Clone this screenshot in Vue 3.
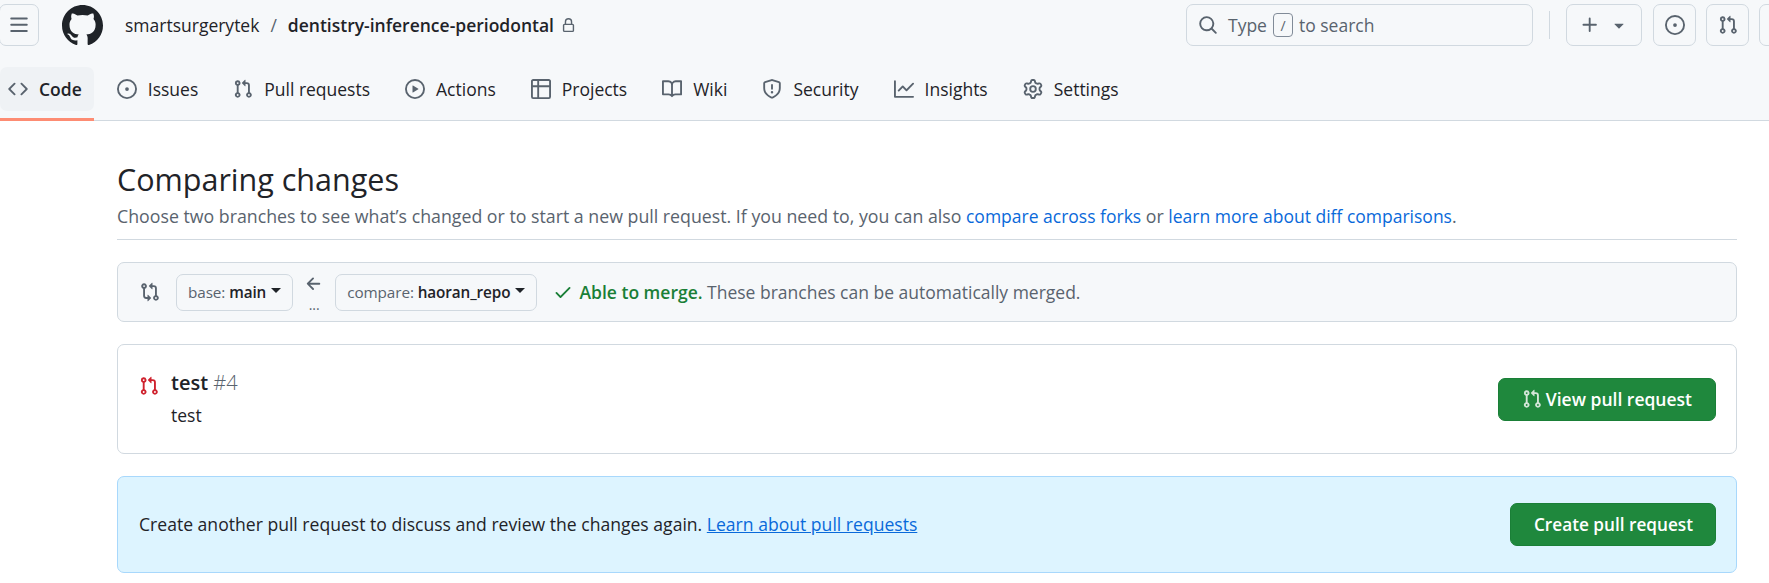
<script setup>
const icons = {
  bars: 'M1 2.75A.75.75 0 0 1 1.75 2h12.5a.75.75 0 0 1 0 1.5H1.75A.75.75 0 0 1 1 2.75Zm0 5A.75.75 0 0 1 1.75 7h12.5a.75.75 0 0 1 0 1.5H1.75A.75.75 0 0 1 1 7.75ZM1.75 12h12.5a.75.75 0 0 1 0 1.5H1.75a.75.75 0 0 1 0-1.5Z',
  github: 'M8 0c4.42 0 8 3.58 8 8a8.013 8.013 0 0 1-5.45 7.59c-.4.08-.55-.17-.55-.38 0-.27.01-1.13.01-2.2 0-.75-.25-1.23-.54-1.48 1.78-.2 3.65-.88 3.65-3.95 0-.88-.31-1.59-.82-2.15.08-.2.36-1.02-.08-2.12 0 0-.67-.22-2.2.82-.64-.18-1.32-.27-2-.27-.68 0-1.36.09-2 .27-1.53-1.03-2.2-.82-2.2-.82-.44 1.1-.16 1.92-.08 2.12-.51.56-.82 1.28-.82 2.15 0 3.06 1.86 3.75 3.64 3.95-.23.2-.44.55-.51 1.07-.46.21-1.61.55-2.33-.66-.15-.24-.6-.83-1.23-.82-.67.01-.27.38.01.53.34.19.73.9.82 1.13.16.45.68 1.31 2.69.94 0 .67.01 1.3.01 1.49 0 .21-.15.45-.55.38A7.995 7.995 0 0 1 0 8c0-4.42 3.58-8 8-8Z',
  lock: 'M4 4a4 4 0 0 1 8 0v2h.25c.966 0 1.75.784 1.75 1.75v5.5A1.75 1.75 0 0 1 12.25 15h-8.5A1.75 1.75 0 0 1 2 13.25v-5.5C2 6.784 2.784 6 3.75 6H4Zm8.25 3.5h-8.5a.25.25 0 0 0-.25.25v5.5c0 .138.112.25.25.25h8.5a.25.25 0 0 0 .25-.25v-5.5a.25.25 0 0 0-.25-.25ZM10.5 6V4a2.5 2.5 0 1 0-5 0v2Z',
  code: 'm11.28 3.22 4.25 4.25a.75.75 0 0 1 0 1.06l-4.25 4.25a.749.749 0 0 1-1.275-.326.749.749 0 0 1 .215-.734L13.94 8l-3.72-3.72a.749.749 0 0 1 .326-1.275.749.749 0 0 1 .734.215Zm-6.56 0a.751.751 0 0 1 1.042.018.751.751 0 0 1 .018 1.042L2.06 8l3.72 3.72a.749.749 0 0 1-.326 1.275.749.749 0 0 1-.734-.215L.47 8.53a.75.75 0 0 1 0-1.06Z',
  issue: 'M8 9.5a1.5 1.5 0 1 0 0-3 1.5 1.5 0 0 0 0 3ZM8 0a8 8 0 1 1 0 16A8 8 0 0 1 8 0ZM1.5 8a6.5 6.5 0 1 0 13 0 6.5 6.5 0 0 0-13 0Z',
  pr: 'M1.5 3.25a2.25 2.25 0 1 1 3 2.122v5.256a2.251 2.251 0 1 1-1.5 0V5.372A2.25 2.25 0 0 1 1.5 3.25Zm5.677-.177L9.573.677A.25.25 0 0 1 10 .854V2.5h1A2.5 2.5 0 0 1 13.5 5v5.628a2.251 2.251 0 1 1-1.5 0V5a1 1 0 0 0-1-1h-1v1.646a.25.25 0 0 1-.427.177L7.177 3.427a.25.25 0 0 1 0-.354ZM3.75 2.5a.75.75 0 1 0 0 1.5.75.75 0 0 0 0-1.5Zm0 9.5a.75.75 0 1 0 0 1.5.75.75 0 0 0 0-1.5Zm8.25.75a.75.75 0 1 0 1.5 0 .75.75 0 0 0-1.5 0Z',
  play: 'M8 0a8 8 0 1 1 0 16A8 8 0 0 1 8 0ZM1.5 8a6.5 6.5 0 1 0 13 0 6.5 6.5 0 0 0-13 0Zm4.879-2.773 4.264 2.559a.25.25 0 0 1 0 .428l-4.264 2.559A.25.25 0 0 1 6 10.559V5.442a.25.25 0 0 1 .379-.215Z',
  table: 'M0 1.75C0 .784.784 0 1.75 0h12.5C15.216 0 16 .784 16 1.75v12.5A1.75 1.75 0 0 1 14.25 16H1.75A1.75 1.75 0 0 1 0 14.25ZM6.5 6.5v8h7.75a.25.25 0 0 0 .25-.25V6.5Zm8-1.5V1.75a.25.25 0 0 0-.25-.25H6.5V5Zm-13 1.5v7.75c0 .138.112.25.25.25H5v-8ZM5 5V1.5H1.75a.25.25 0 0 0-.25.25V5Z',
  book: 'M0 1.75A.75.75 0 0 1 .75 1h4.253c1.227 0 2.317.59 3 1.501A3.743 3.743 0 0 1 11.006 1h4.245a.75.75 0 0 1 .75.75v10.5a.75.75 0 0 1-.75.75h-4.507a2.25 2.25 0 0 0-1.591.659l-.622.621a.75.75 0 0 1-1.06 0l-.622-.621A2.25 2.25 0 0 0 5.258 13H.75a.75.75 0 0 1-.75-.75Zm7.251 10.324.004-5.073-.002-2.253A2.25 2.25 0 0 0 5.003 2.5H1.5v9h3.757a3.75 3.75 0 0 1 1.994.574ZM8.755 4.75l-.004 7.322a3.752 3.752 0 0 1 1.992-.572H14.5v-9h-3.495a2.25 2.25 0 0 0-2.25 2.25Z',
  shield: 'M7.467.133a1.748 1.748 0 0 1 1.066 0l5.25 1.68A1.75 1.75 0 0 1 15 3.48V7c0 1.566-.32 3.182-1.303 4.682-.983 1.498-2.585 2.813-5.032 3.855a1.697 1.697 0 0 1-1.33 0c-2.447-1.042-4.049-2.357-5.032-3.855C1.32 10.182 1 8.566 1 7V3.48a1.75 1.75 0 0 1 1.217-1.667Zm.61 1.429a.25.25 0 0 0-.153 0l-5.25 1.68a.25.25 0 0 0-.174.238V7c0 1.358.275 2.666 1.057 3.86.784 1.194 2.121 2.34 4.366 3.297a.196.196 0 0 0 .154 0c2.245-.956 3.582-2.104 4.366-3.298C13.225 9.666 13.5 8.36 13.5 7V3.48a.251.251 0 0 0-.174-.237l-5.25-1.68ZM8.75 4.75v3a.75.75 0 0 1-1.5 0v-3a.75.75 0 0 1 1.5 0ZM9 10.5a1 1 0 1 1-2 0 1 1 0 0 1 2 0Z',
  graph: 'M1.5 1.75V13.5h13.75a.75.75 0 0 1 0 1.5H.75a.75.75 0 0 1-.75-.75V1.75a.75.75 0 0 1 1.5 0Zm14.28 2.53-5.25 5.25a.75.75 0 0 1-1.06 0L7 7.06 4.28 9.78a.751.751 0 0 1-1.042-.018.751.751 0 0 1-.018-1.042l3.25-3.25a.75.75 0 0 1 1.06 0L10 7.94l4.72-4.72a.751.751 0 0 1 1.042.018.751.751 0 0 1 .018 1.042Z',
  gear: 'M8 0a8.2 8.2 0 0 1 .701.031C9.444.095 9.99.645 10.16 1.29l.288 1.107c.018.066.079.158.212.224.231.114.454.243.668.386.123.082.233.09.299.071l1.103-.303c.644-.176 1.392.021 1.82.63.27.385.506.792.704 1.218.315.675.111 1.422-.364 1.891l-.814.806c-.049.048-.098.147-.088.294.016.257.016.515 0 .772-.01.147.038.246.088.294l.814.806c.475.469.679 1.216.364 1.891a7.977 7.977 0 0 1-.704 1.217c-.428.61-1.176.807-1.82.63l-1.102-.302c-.067-.019-.177-.011-.3.071a5.909 5.909 0 0 1-.668.386c-.133.066-.194.158-.211.224l-.29 1.106c-.168.646-.715 1.196-1.458 1.26a8.006 8.006 0 0 1-1.402 0c-.743-.064-1.289-.614-1.458-1.26l-.289-1.106c-.018-.066-.079-.158-.212-.224a5.738 5.738 0 0 1-.668-.386c-.123-.082-.233-.09-.299-.071l-1.103.303c-.644.176-1.392-.021-1.82-.63a8.12 8.12 0 0 1-.704-1.218c-.315-.675-.111-1.422.363-1.891l.815-.806c.05-.048.098-.147.088-.294a6.214 6.214 0 0 1 0-.772c.01-.147-.038-.246-.088-.294l-.815-.806C.635 6.045.431 5.298.746 4.623a7.92 7.92 0 0 1 .704-1.217c.428-.61 1.176-.807 1.82-.63l1.102.302c.067.019.177.011.3-.071.214-.143.437-.272.668-.386.133-.066.194-.158.211-.224l.29-1.106C6.009.645 6.556.095 7.299.03 7.53.01 7.764 0 8 0Zm-.571 1.525c-.036.003-.108.036-.137.146l-.289 1.105c-.147.561-.549.967-.998 1.189-.173.086-.34.183-.5.29-.417.278-.97.423-1.529.27l-1.103-.303c-.109-.03-.175.016-.195.045-.22.312-.412.644-.573.99-.014.031-.021.11.059.19l.815.806c.411.406.562.957.53 1.456a4.709 4.709 0 0 0 0 .582c.032.499-.119 1.05-.53 1.456l-.815.806c-.081.08-.073.159-.059.19.162.346.353.677.573.989.02.03.085.076.195.046l1.102-.303c.56-.153 1.113-.008 1.53.27.161.107.328.204.501.29.447.222.85.629.997 1.189l.289 1.105c.029.109.101.143.137.146a6.6 6.6 0 0 0 1.142 0c.036-.003.108-.036.137-.146l.289-1.105c.147-.561.549-.967.998-1.189.173-.086.34-.183.5-.29.417-.278.97-.423 1.529-.27l1.103.303c.109.029.175-.016.195-.045.22-.313.411-.644.573-.99.014-.031.021-.11-.059-.19l-.815-.806c-.411-.406-.562-.957-.53-1.456a4.709 4.709 0 0 0 0-.582c-.032-.499.119-1.05.53-1.456l.815-.806c.081-.08.073-.159.059-.19a6.464 6.464 0 0 0-.573-.989c-.02-.03-.085-.076-.195-.046l-1.102.303c-.56.153-1.113.008-1.53-.27a4.44 4.44 0 0 0-.501-.29c-.447-.222-.85-.629-.997-1.189l-.289-1.105c-.029-.11-.101-.143-.137-.146a6.6 6.6 0 0 0-1.142 0ZM11 8a3 3 0 1 1-6 0 3 3 0 0 1 6 0ZM9.5 8a1.5 1.5 0 1 0-3.001.001A1.5 1.5 0 0 0 9.5 8Z',
  search: 'M10.68 11.74a6 6 0 0 1-7.922-8.982 6 6 0 0 1 8.982 7.922l3.04 3.04a.749.749 0 0 1-.326 1.275.749.749 0 0 1-.734-.215ZM11.5 7a4.499 4.499 0 1 0-8.997 0A4.499 4.499 0 0 0 11.5 7Z',
  plus: 'M7.75 2a.75.75 0 0 1 .75.75V7h4.25a.75.75 0 0 1 0 1.5H8.5v4.25a.75.75 0 0 1-1.5 0V8.5H2.75a.75.75 0 0 1 0-1.5H7V2.75A.75.75 0 0 1 7.75 2Z',
  caret: 'm4.427 7.427 3.396 3.396a.25.25 0 0 0 .354 0l3.396-3.396A.25.25 0 0 0 11.396 7H4.604a.25.25 0 0 0-.177.427Z',
  arrow: 'M7.78 12.53a.75.75 0 0 1-1.06 0L2.47 8.28a.75.75 0 0 1 0-1.06l4.25-4.25a.751.751 0 0 1 1.042.018.751.751 0 0 1 .018 1.042L4.81 7h7.44a.75.75 0 0 1 0 1.5H4.81l2.97 2.97a.75.75 0 0 1 0 1.06Z',
  check: 'M13.78 4.22a.75.75 0 0 1 0 1.06l-7.25 7.25a.75.75 0 0 1-1.06 0L2.22 9.28a.751.751 0 0 1 .018-1.042.751.751 0 0 1 1.042-.018L6 10.94l6.72-6.72a.75.75 0 0 1 1.06 0Z',
  compare: 'M9.573.677A.25.25 0 0 1 10 .854V2.5h1A2.5 2.5 0 0 1 13.5 5v5.628a2.251 2.251 0 1 1-1.5 0V5a1 1 0 0 0-1-1h-1v1.646a.25.25 0 0 1-.427.177L7.177 3.427a.25.25 0 0 1 0-.354ZM6 12v-1.646a.25.25 0 0 1 .427-.177l2.396 2.396a.25.25 0 0 1 0 .354l-2.396 2.396A.25.25 0 0 1 6 15.146V13.5H5A2.5 2.5 0 0 1 2.5 11V5.372a2.25 2.25 0 1 1 1.5 0V11a1 1 0 0 0 1 1ZM4 3.25a.75.75 0 1 0-1.5 0 .75.75 0 0 0 1.5 0ZM12.75 12a.75.75 0 1 0 0 1.5.75.75 0 0 0 0-1.5Z'
}

const tabs = [
  { label: 'Code', icon: 'code', active: true },
  { label: 'Issues', icon: 'issue' },
  { label: 'Pull requests', icon: 'pr' },
  { label: 'Actions', icon: 'play' },
  { label: 'Projects', icon: 'table' },
  { label: 'Wiki', icon: 'book' },
  { label: 'Security', icon: 'shield' },
  { label: 'Insights', icon: 'graph' },
  { label: 'Settings', icon: 'gear' }
]
</script>

<template>
  <div class="page">
    <header class="header">
      <div class="top">
        <button class="btn-icon menu">
          <svg class="ic" viewBox="0 0 16 16"><path :d="icons.bars" /></svg>
        </button>
        <svg class="logo" viewBox="0 0 16 16"><path :d="icons.github" /></svg>
        <a class="owner">smartsurgerytek</a>
        <span class="slash">/</span>
        <a class="repo">dentistry-inference-periodontal</a>
        <svg class="lock" viewBox="0 0 16 16"><path :d="icons.lock" /></svg>
        <div class="spacer"></div>
        <div class="search">
          <svg class="ic" viewBox="0 0 16 16"><path :d="icons.search" /></svg>
          <span>Type</span>
          <kbd>/</kbd>
          <span>to search</span>
        </div>
        <span class="divider"></span>
        <button class="btn-icon plus">
          <svg class="ic" viewBox="0 0 16 16"><path :d="icons.plus" /></svg>
          <svg class="ic" viewBox="0 0 16 16"><path :d="icons.caret" /></svg>
        </button>
        <button class="btn-icon square">
          <svg class="ic" viewBox="0 0 16 16"><path :d="icons.issue" /></svg>
        </button>
        <button class="btn-icon square">
          <svg class="ic" viewBox="0 0 16 16"><path :d="icons.pr" /></svg>
        </button>
        <button class="btn-icon square"></button>
      </div>
      <nav class="tabs">
        <a v-for="t in tabs" :key="t.label" class="tab" :class="{ active: t.active }">
          <span class="tab-inner">
            <svg class="ic" viewBox="0 0 16 16"><path :d="icons[t.icon]" /></svg>
            {{ t.label }}
          </span>
        </a>
      </nav>
    </header>

    <main class="main">
      <h1>Comparing changes</h1>
      <p class="sub">
        Choose two branches to see what’s changed or to start a new pull request. If you need to, you can also
        <a>compare across forks</a> or <a>learn more about diff comparisons</a>.
      </p>

      <div class="range">
        <svg class="ic compare" viewBox="0 0 16 16"><path :d="icons.compare" /></svg>
        <button class="select">base: <b>main</b><i class="caret"></i></button>
        <div class="arrow">
          <svg class="ic" viewBox="0 0 16 16"><path :d="icons.arrow" /></svg>
          <span>...</span>
        </div>
        <button class="select">compare: <b>haoran_repo</b><i class="caret"></i></button>
        <svg class="ic check" viewBox="0 0 16 16"><path :d="icons.check" /></svg>
        <span class="merge"><b>Able to merge.</b> These branches can be automatically merged.</span>
      </div>

      <div class="card">
        <svg class="ic closed" viewBox="0 0 16 16"><path :d="icons.pr" /></svg>
        <div class="pr-text">
          <div class="pr-title"><b>test</b> <span>#4</span></div>
          <div class="pr-body">test</div>
        </div>
        <button class="green view">
          <svg class="ic" viewBox="0 0 16 16"><path :d="icons.pr" /></svg>
          View pull request
        </button>
      </div>

      <div class="notice">
        <span class="notice-text">Create another pull request to discuss and review the changes again. <a>Learn about pull requests</a></span>
        <button class="green create">Create pull request</button>
      </div>
    </main>
  </div>
</template>

<style scoped>
.page {
  font-family: "Open Sans", "Noto Sans", sans-serif;
  font-size: 17.5px;
  color: #1f2328;
  height: 583px;
  overflow: hidden;
  background: #fff;
}
.ic {
  width: 20px;
  height: 20px;
  fill: #59636e;
  flex: none;
}
button {
  font-family: inherit;
}
.header {
  height: 121px;
  box-sizing: border-box;
  background: #f6f8fa;
  border-bottom: 1px solid #d1d9e0;
}
.top {
  display: flex;
  align-items: center;
  height: 50px;
  margin-right: -43px;
  white-space: nowrap;
}
.btn-icon {
  display: flex;
  align-items: center;
  justify-content: center;
  height: 42px;
  flex: none;
  box-sizing: border-box;
  background: transparent;
  border: 1px solid #d1d9e0;
  border-radius: 7px;
  padding: 0;
}
.menu {
  width: 40px;
  margin-left: -1px;
  margin-right: 23px;
}
.logo {
  width: 41px;
  height: 41px;
  fill: #1f2328;
  flex: none;
  margin-right: 22px;
}
.owner {
  color: #1f2328;
}
.slash {
  color: #59636e;
  margin: 0 11px;
}
.repo {
  font-weight: 600;
}
.lock {
  width: 15px;
  height: 15px;
  fill: #59636e;
  margin-left: 7px;
}
.spacer {
  flex: 1;
}
.search {
  display: flex;
  align-items: center;
  width: 347px;
  height: 42px;
  box-sizing: border-box;
  flex: none;
  gap: 6px;
  padding-left: 11px;
  border: 1px solid #d1d9e0;
  border-radius: 7px;
  color: #59636e;
}
.search .ic {
  margin-right: 4px;
}
kbd {
  display: inline-flex;
  align-items: center;
  justify-content: center;
  width: 20px;
  height: 24px;
  box-sizing: border-box;
  border: 1px solid #818b98;
  border-radius: 4px;
  font-family: inherit;
  font-size: 14px;
}
.divider {
  width: 1px;
  height: 28px;
  background: #d1d9e0;
  margin: 0 16px;
  flex: none;
}
.plus {
  width: 76px;
  gap: 9px;
  margin-right: 11px;
}
.square {
  width: 43px;
  margin-right: 10px;
}
.tabs {
  display: flex;
  height: 70px;
  align-items: flex-end;
  gap: 17px;
}
.tab {
  display: flex;
  align-items: center;
  height: 54px;
  box-sizing: border-box;
  border-bottom: 3px solid transparent;
  padding-bottom: 7px;
  margin-bottom: -1px;
}
.tab-inner {
  display: flex;
  align-items: center;
  gap: 11px;
  height: 44px;
  padding: 0 10px 0 8px;
  border-radius: 7px;
}
.tab.active {
  margin-right: -2px;
  border-bottom-color: #fd8c73;
  font-weight: 600;
}
.tab.active .tab-inner {
  padding-right: 12px;
  background: #eff2f5;
}
.main {
  padding: 0 32px 0 117px;
}
h1 {
  margin: 0;
  padding-top: 38px;
  font-size: 30.5px;
  font-weight: 400;
  line-height: 40px;
}
.sub {
  margin: 4px 0 0;
  padding-bottom: 10px;
  font-size: 17.75px;
  line-height: 26px;
  color: #59636e;
  border-bottom: 1px solid #d1d9e0;
  white-space: nowrap;
}
a {
  color: inherit;
}
.sub a {
  color: #0969da;
  font-size: 17.5px;
}
.range {
  display: flex;
  align-items: center;
  height: 60px;
  box-sizing: border-box;
  margin-top: 22px;
  background: #f6f8fa;
  border: 1px solid #d1d9e0;
  border-radius: 7px;
  padding-left: 22px;
  color: #59636e;
}
.compare {
  margin-right: 16px;
}
.select {
  display: flex;
  align-items: center;
  height: 37px;
  padding: 0 11px;
  background: #f6f8fa;
  border: 1px solid #d1d9e0;
  border-radius: 7px;
  color: #59636e;
  font-size: 15.3px;
  letter-spacing: -0.1px;
  white-space: pre;
}
.select b {
  color: #1f2328;
  font-weight: 600;
}
.caret {
  width: 0;
  height: 0;
  margin: -4px 0 0 5px;
  border-left: 5px solid transparent;
  border-right: 5px solid transparent;
  border-top: 5px solid #1f2328;
}
.arrow {
  display: flex;
  flex-direction: column;
  align-items: center;
  width: 42px;
  font-size: 14px;
  line-height: 10px;
}
.arrow span {
  margin-top: 6px;
}
.check {
  fill: #1a7f37;
  margin: 0 6px 0 16px;
}
.merge b {
  color: #1a7f37;
  font-weight: 600;
}
.card {
  display: flex;
  align-items: center;
  height: 110px;
  box-sizing: border-box;
  margin-top: 22px;
  padding: 0 21px;
  border: 1px solid #d1d9e0;
  border-radius: 7px;
}
.closed {
  fill: #cf222e;
  margin: -26px 12px 0 0;
}
.pr-text {
  flex: 1;
  padding-top: 2px;
}
.pr-title {
  font-size: 20px;
  line-height: 30px;
}
.pr-title b {
  font-weight: 600;
}
.pr-title span {
  color: #59636e;
  font-weight: 300;
}
.pr-body {
  line-height: 34px;
}
.green {
  display: flex;
  align-items: center;
  gap: 4px;
  height: 43px;
  padding: 0 23px;
  margin-right: -1px;
  background: #1f883d;
  border: 1px solid #1a7f37;
  border-radius: 7px;
  color: #fff;
  font-size: 17.5px;
  font-weight: 600;
}
.green .ic {
  fill: #d3e6d8;
}
.create {
  padding: 0 22px 0 23px;
  font-size: 17.2px;
}
.notice {
  display: flex;
  align-items: center;
  justify-content: space-between;
  height: 97px;
  box-sizing: border-box;
  margin-top: 22px;
  padding: 0 21px;
  background: #ddf4ff;
  border: 1px solid #a8d8fc;
  border-radius: 7px;
  font-size: 17.58px;
}
.notice-text {
  padding-bottom: 2px;
}
.notice a {
  color: #0969da;
  text-decoration: underline;
}
</style>
